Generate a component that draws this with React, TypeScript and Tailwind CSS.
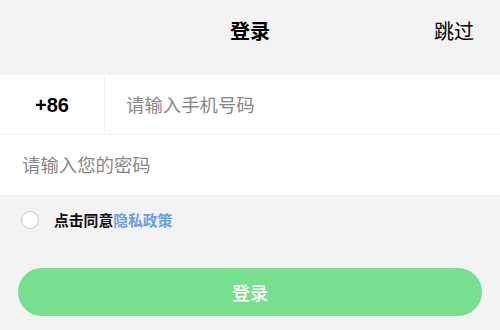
export default function App() {
  return (
    <div
      className="w-[500px] h-[330px] bg-[#f3f3f3] overflow-hidden"
      style={{ fontFamily: '"Noto Sans CJK SC", "Noto Sans", sans-serif' }}
    >
      <div className="relative h-[62px] flex items-center justify-center">
        <span className="text-[20px] font-bold text-black">登录</span>
        <span className="absolute right-[26px] text-[20px] text-black">跳过</span>
      </div>

      <div className="mt-[13px] bg-white">
        <div className="flex h-[60px] border-b border-[#f0f0f0]">
          <div className="w-[105px] flex items-center justify-center border-r border-[#f0f0f0]">
            <span
              className="text-[20px] font-bold text-black"
              style={{ fontFamily: '"Liberation Sans", "Noto Sans", sans-serif' }}
            >
              +86
            </span>
          </div>
          <div className="flex-1 flex items-center pl-[21px] text-[18.4px] text-[#888]">
            请输入手机号码
          </div>
        </div>
        <div className="h-[60px] flex items-center pl-[22px] text-[18.4px] text-[#888]">
          请输入您的密码
        </div>
      </div>

      <div className="h-[50px] flex items-center pl-[21px]">
        <div className="w-[18px] h-[18px] rounded-full border border-[#c4c4c4] bg-white" />
        <span className="ml-[15px] text-[14.8px] font-bold text-[#111]">点击同意</span>
        <span className="text-[14.8px] font-semibold text-[#6c9ee6]">隐私政策</span>
      </div>

      <div className="px-[18px] mt-[23px]">
        <button className="w-full h-[48px] rounded-full bg-[#77df8f] text-white text-[18px] font-medium flex items-center justify-center">
          登录
        </button>
      </div>
    </div>
  )
}
